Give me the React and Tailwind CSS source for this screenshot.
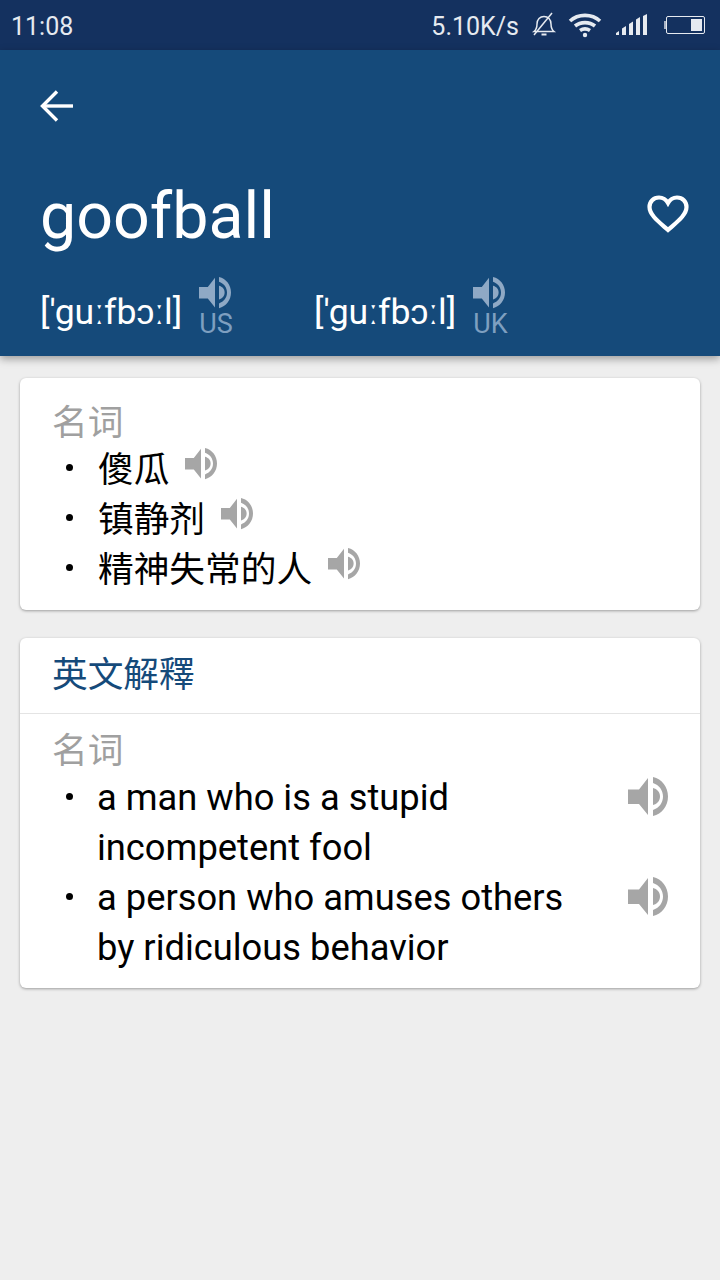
import React from "react";

const Speaker = ({ className }) => (
  <svg viewBox="0 0 40 40" className={className} fill="currentColor">
    <path d="M0 12.5H11L20 1V38L11 27H0Z" />
    <path d="M25 11C29 12 32 15 32 19.5C32 24 29 27 25 28Z" />
    <path d="M25 0C34 2 40 10 40 19.5C40 29 34 37 25 39V33C31 31 35 26 35 19.5C35 13 31 8 25 6Z" />
  </svg>
);

const StatusBar = () => (
  <div className="h-[50px] bg-[#14315f] flex items-center pl-3 pr-[15px] text-[#e6eaf0] text-[25px]">
    <span className="mt-[4px] -ml-[1px]">11:08</span>
    <span className="ml-auto mt-[4px]">5.10K/s</span>
    <svg viewBox="0 0 26 26" className="w-[26px] h-[26px] ml-[12px]" fill="none" stroke="currentColor" strokeWidth="1.5">
      <path d="M3 19.5C5.5 17.5 6 15 6 12C6 7.5 9 4.5 13 4.5C17 4.5 20 7.5 20 12C20 15 20.5 17.5 23 19.5Z" />
      <path d="M10.5 22.5H15.5" strokeWidth="2" />
      <path d="M3 23L21 1" />
    </svg>
    <svg viewBox="0 0 34 26" className="w-[34px] h-[26px] ml-[11px]" fill="none" stroke="currentColor" strokeWidth="3.6">
      <path d="M2 9C10 1.5 24 1.5 32 9" />
      <path d="M7 14C12.5 9.5 21.5 9.5 27 14" />
      <path d="M12 18.5C15 16.5 19 16.5 22 18.5" />
      <circle cx="17" cy="23" r="2.2" fill="currentColor" stroke="none" />
    </svg>
    <svg viewBox="0 0 32 22" className="w-[32px] h-[22px] ml-[14px]" fill="currentColor">
      <path d="M0 19L3 17V21H0Z" />
      <path d="M6 14.5L10 12V21H6Z" />
      <path d="M13 10L17 7.5V21H13Z" />
      <path d="M20 5.5L24 3V21H20Z" />
      <path d="M27 2L31 0V21H27Z" />
    </svg>
    <div className="ml-[16px] flex items-center">
      <div className="w-[2px] h-[8px] bg-[#e6eaf0]/70" />
      <div className="w-[39px] h-[18px] border border-[#e6eaf0] rounded-[2px] flex justify-end p-[2px]">
        <div className="w-[11px] bg-[#e6eaf0]" />
      </div>
    </div>
  </div>
);

const Phonetic = ({ label, className }) => (
  <div className={`flex items-start ${className}`}>
    <span className="text-white text-[35.6px] leading-[42px] mt-[14px]">['guːfbɔːl]</span>
    <div className="ml-[17px] flex flex-col items-start text-[#7e9fc0]">
      <Speaker className="w-[32px] h-[32px] text-[#8fa9c5]" />
      <span className="text-[27px] leading-[30px]">{label}</span>
    </div>
  </div>
);

const Header = () => (
  <div className="h-[306px] bg-[#154a7a] pt-[39px] px-[40px] shadow-[0_3px_8px_rgba(0,0,0,0.35)] relative">
    <svg viewBox="0 0 34 34" className="w-[34px] h-[34px]" fill="none" stroke="#fff" strokeWidth="3.4">
      <path d="M33 17H3" />
      <path d="M17 2.5L2.5 17L17 31.5" />
    </svg>
    <div className="flex items-center justify-between mt-[51px]">
      <span className="text-white text-[64.5px] leading-[80px] translate-y-[2px]">goofball</span>
      <svg viewBox="0 0 42 38" className="w-[42px] h-[38px] mr-[-9px]" fill="none" stroke="#fff" strokeWidth="4.2">
        <path d="M21 35C12 27 2.5 20 2.5 12C2.5 6.5 6.5 2.5 12 2.5C15.5 2.5 19 4.5 21 8C23 4.5 26.5 2.5 30 2.5C35.5 2.5 39.5 6.5 39.5 12C39.5 20 30 27 21 35Z" />
      </svg>
    </div>
    <div className="flex mt-[23px]">
      <Phonetic label="US" className="w-[274px]" />
      <Phonetic label="UK" />
    </div>
  </div>
);

const WordRow = ({ text }) => (
  <div className="flex items-center h-[50px] text-black text-[35.7px]">
    <span className="w-[7px] h-[7px] rounded-full bg-black shrink-0 ml-[13px] mr-[25px]" />
    <span className="font-['Noto_Sans_CJK_SC',sans-serif] leading-[50px]">{text}</span>
    <Speaker className="w-[32px] h-[32px] text-[#a6a6a6] ml-[16px] -translate-y-[3px]" />
  </div>
);

const DefRow = ({ lines }) => (
  <div className="flex items-start">
    <span className="w-[7px] h-[7px] rounded-full bg-black shrink-0 ml-[13px] mr-[24px] mt-[20px]" />
    <div className="flex-1 text-black text-[36.3px] leading-[50px]">
      {lines.map((l) => (
        <div key={l}>{l}</div>
      ))}
    </div>
    <Speaker className="w-[40px] h-[40px] text-[#a6a6a6] mt-[4px]" />
  </div>
);

export default function App() {
  return (
    <div className="w-[720px] h-[1280px] bg-[#eeeeee] font-['Roboto',sans-serif] overflow-hidden">
      <StatusBar />
      <Header />
      <div className="px-[20px] pt-[22px] flex flex-col gap-[28px]">
        <div className="h-[232px] bg-white rounded-[6px] shadow-[0_1px_3px_rgba(0,0,0,0.35)] pl-[33px] pt-[17px]">
          <div className="text-[#a0a0a0] text-[35.7px] leading-[50px] h-[47px] -ml-[1px] font-['Noto_Sans_CJK_SC',sans-serif]">名词</div>
          <WordRow text="傻瓜" />
          <WordRow text="镇静剂" />
          <WordRow text="精神失常的人" />
        </div>
        <div className="h-[350px] bg-white rounded-[6px] shadow-[0_1px_3px_rgba(0,0,0,0.35)]">
          <div className="h-[76px] border-b border-[#e4e4e4] flex items-center pl-[32px] pb-[8px] text-[#154a7a] text-[35.7px] font-['Noto_Sans_CJK_SC',sans-serif]">英文解釋</div>
          <div className="pl-[33px] pr-[32px] pt-[9px]">
            <div className="text-[#a0a0a0] text-[35.7px] leading-[50px] h-[50px] -ml-[1px] font-['Noto_Sans_CJK_SC',sans-serif]">名词</div>
            <DefRow lines={["a man who is a stupid", "incompetent fool"]} />
            <DefRow lines={["a person who amuses others", "by ridiculous behavior"]} />
          </div>
        </div>
      </div>
    </div>
  );
}
